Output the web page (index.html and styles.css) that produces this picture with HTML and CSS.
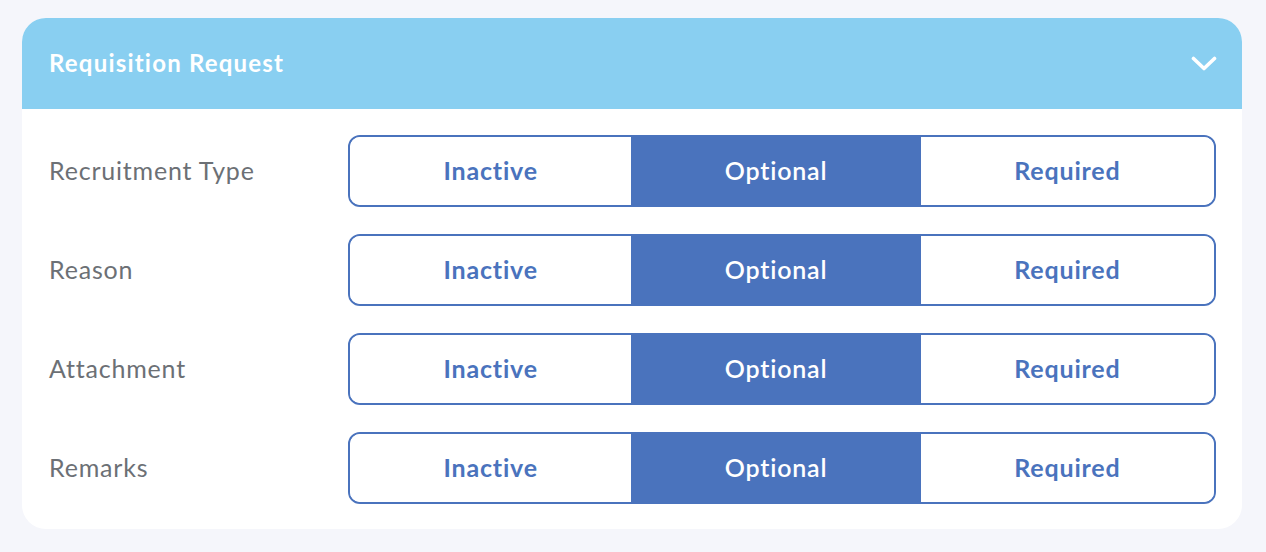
FILE: index.html
```html
<!DOCTYPE html>
<html lang="en">
<head>
    <meta charset="UTF-8">
    <meta name="viewport" content="width=device-width, initial-scale=1.0">
    <title>Requisition Request</title>
    <link rel="stylesheet" href="styles.css">
</head>
<body>
    <div class="panel">
        <div class="panel-header">
            <h2>Requisition Request</h2>
            <svg class="chevron" width="26" height="16" viewBox="0 0 26 16" aria-hidden="true">
                <polyline points="2.5,2.5 13,12.5 23.5,2.5" fill="none" stroke="#fff" stroke-width="3.6" stroke-linecap="round" stroke-linejoin="round"/>
            </svg>
        </div>
        <div class="panel-body">
            <div class="field-row">
                <span class="field-label">Recruitment Type</span>
                <div class="segmented">
                    <button type="button">Inactive</button>
                    <button type="button" class="active">Optional</button>
                    <button type="button">Required</button>
                </div>
            </div>
            <div class="field-row">
                <span class="field-label">Reason</span>
                <div class="segmented">
                    <button type="button">Inactive</button>
                    <button type="button" class="active">Optional</button>
                    <button type="button">Required</button>
                </div>
            </div>
            <div class="field-row">
                <span class="field-label">Attachment</span>
                <div class="segmented">
                    <button type="button">Inactive</button>
                    <button type="button" class="active">Optional</button>
                    <button type="button">Required</button>
                </div>
            </div>
            <div class="field-row">
                <span class="field-label">Remarks</span>
                <div class="segmented">
                    <button type="button">Inactive</button>
                    <button type="button" class="active">Optional</button>
                    <button type="button">Required</button>
                </div>
            </div>
        </div>
    </div>
</body>
</html>
```

FILE: styles.css
```css
body {
    font-family: Lato, "Noto Sans", sans-serif;
    background-color: #f5f6fb;
    margin: 0;
    padding: 18px 24px 23px 22px;
}
.panel {
    background: #fff;
    border-radius: 24px;
    overflow: hidden;
}
.panel-header {
    background-color: #89cff1;
    height: 91px;
    display: flex;
    align-items: center;
    justify-content: space-between;
    padding: 0 25px 0 27px;
}
.panel-header h2 {
    margin: 0 0 3px;
    color: #fff;
    font-size: 24px;
    font-weight: 700;
    letter-spacing: 1.2px;
}
.chevron {
    display: block;
}
.panel-body {
    padding: 26px 26px 25px 27px;
    display: flex;
    flex-direction: column;
    gap: 27px;
}
.field-row {
    display: flex;
    align-items: center;
}
.field-label {
    width: 299px;
    flex-shrink: 0;
    padding-bottom: 3px;
    color: #6c7075;
    font-size: 25px;
    letter-spacing: 0.8px;
}
.segmented {
    flex: 1;
    display: flex;
    height: 72px;
    box-sizing: border-box;
    border: 2px solid #4a73bd;
    border-radius: 12px;
    overflow: hidden;
}
.segmented button {
    flex: 1 1 auto;
    border: none;
    padding: 0 0 3px;
    background: #fff;
    color: #4a73bd;
    font-family: inherit;
    font-size: 25px;
    font-weight: 700;
    letter-spacing: 0.8px;
    cursor: pointer;
}
.segmented button.active {
    background-color: #4a73bd;
    color: #fff;
    font-weight: 600;
}
```
